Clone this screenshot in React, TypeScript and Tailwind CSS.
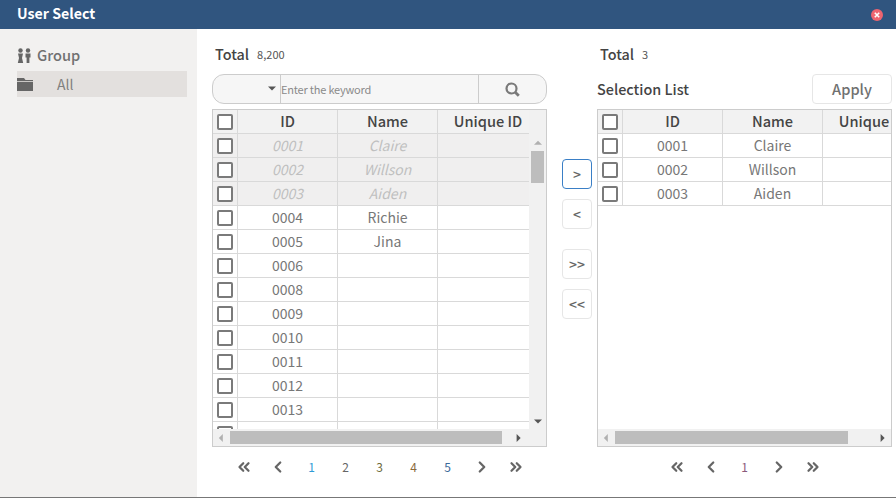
import React from 'react';
import { ChevronLeft, ChevronRight, ChevronsLeft, ChevronsRight } from 'lucide-react';

const font = { fontFamily: '"Noto Sans CJK KR", "Noto Sans", sans-serif' };

const leftRows = [
  { id: '0001', name: 'Claire', off: true },
  { id: '0002', name: 'Willson', off: true },
  { id: '0003', name: 'Aiden', off: true },
  { id: '0004', name: 'Richie' },
  { id: '0005', name: 'Jina' },
  { id: '0006', name: '' },
  { id: '0008', name: '' },
  { id: '0009', name: '' },
  { id: '0010', name: '' },
  { id: '0011', name: '' },
  { id: '0012', name: '' },
  { id: '0013', name: '' },
  { id: '', name: '' },
];

const rightRows = [
  { id: '0001', name: 'Claire' },
  { id: '0002', name: 'Willson' },
  { id: '0003', name: 'Aiden' },
];

const Check = () => (
  <span className="block w-[16px] h-[16px] border-2 border-[#7a7a7a] rounded-[2px] bg-white" />
);

const HeadRow = () => (
  <div className="flex h-[24px] shrink-0 bg-[#f2f2f2] border-b border-[#d9d9d9] text-[14.6px] font-medium text-[#444] leading-[22px] w-max">
    <div className="w-[25px] border-r border-[#d9d9d9] flex items-center justify-center"><Check /></div>
    <div className="w-[100px] border-r border-[#d9d9d9] text-center">ID</div>
    <div className="w-[100px] border-r border-[#d9d9d9] text-center">Name</div>
    <div className="w-[100px] text-center whitespace-nowrap">Unique ID</div>
  </div>
);

const Row = ({ id, name, off }: { id: string; name: string; off?: boolean }) => (
  <div
    className={
      'flex h-[24px] shrink-0 border-b border-[#d9d9d9] text-[14px] leading-[23px] w-max ' +
      (off ? 'bg-[#f0efef] text-[#bfbfbf] italic' : 'bg-white text-[#777]')
    }
  >
    <div className="w-[25px] border-r border-[#d9d9d9] flex items-center justify-center"><Check /></div>
    <div className="w-[100px] border-r border-[#d9d9d9] text-center">{id}</div>
    <div className="w-[100px] border-r border-[#d9d9d9] text-center">{name}</div>
    <div className="w-[100px]" />
  </div>
);

const Tri = ({ dir, color }: { dir: 'up' | 'down' | 'left' | 'right'; color: string }) => {
  const pts = {
    up: '0,6 5,1 10,6',
    down: '0,2 10,2 5,7',
    left: '6,0 6,10 1,5',
    right: '2,0 2,10 7,5',
  }[dir];
  return (
    <svg width="10" height="10" viewBox="0 0 10 10" className="block" style={{ transform: 'scale(0.8)' }}>
      <polygon points={pts} fill={color} />
    </svg>
  );
};

const HBar = ({ thumb, gap }: { thumb: string; gap: string }) => (
  <div className="h-[17px] shrink-0 bg-[#f1f1f1] flex items-center pl-[1px]">
    <div className="w-[16px] flex justify-center"><Tri dir="left" color="#b0b0b0" /></div>
    <div className={'h-[13px] bg-[#bdbdbd] ' + thumb} />
    <div className={gap} />
    <Tri dir="right" color="#555" />
  </div>
);

const PagerIcon = ({ children }: { children: React.ReactNode }) => (
  <span className="w-[34px] flex justify-center text-[#666]">{children}</span>
);

const Pager = ({ pages }: { pages: { n: number; c: string }[] }) => (
  <div className="flex items-center justify-center h-[20px] text-[12px]">
    <PagerIcon><ChevronsLeft size={18} strokeWidth={3} /></PagerIcon>
    <PagerIcon><ChevronLeft size={18} strokeWidth={3} /></PagerIcon>
    {pages.map((p) => (
      <span key={p.n} className="w-[34px] text-center" style={{ color: p.c }}>{p.n}</span>
    ))}
    <PagerIcon><ChevronRight size={18} strokeWidth={3} /></PagerIcon>
    <PagerIcon><ChevronsRight size={18} strokeWidth={3} /></PagerIcon>
  </div>
);

const MoveBtn = ({ label, active, cls }: { label: string; active?: boolean; cls: string }) => (
  <button
    className={
      'w-[30px] h-[30px] rounded-[4px] bg-white text-[14px] font-medium text-[#666] flex items-center justify-center border ' +
      (active ? 'border-[#3a7fc6] ' : 'border-[#e6e6e6] ') +
      cls
    }
  >
    {label}
  </button>
);

export default function App() {
  return (
    <div className="w-[896px] h-[498px] flex flex-col bg-white overflow-hidden border-b border-[#777]" style={font}>
      {/* title bar */}
      <div className="h-[29px] shrink-0 bg-[#30557f] flex items-center justify-between pl-[17px] pr-[13px]">
        <span className="text-white text-[14.2px] font-bold leading-[20px] -mt-[3px]">User Select</span>
        <svg width="12" height="12" viewBox="0 0 12 12">
          <circle cx="6" cy="6" r="6" fill="#ee6570" />
          <path d="M3.8 3.8 L8.2 8.2 M8.2 3.8 L3.8 8.2" stroke="#fff" strokeWidth="1.6" />
        </svg>
      </div>

      <div className="flex flex-1 min-h-0">
        {/* group tree */}
        <div className="w-[197px] shrink-0 bg-[#f2f1f0] pt-[16px] pl-[17px] pr-[10px]">
          <div className="flex items-center h-[20px] gap-[5px] text-[14.6px] font-medium text-[#707070]">
            <svg width="15" height="15" viewBox="0 0 15 15" fill="#666">
              <circle cx="3.5" cy="2.5" r="2.2" />
              <circle cx="11" cy="2.5" r="2.2" />
              <path d="M1 5.5 H6 L5 10 L6.2 15 H0.8 L2 10 Z" />
              <path d="M8.5 5.5 H13.5 V9.5 H12.4 V15 H9.6 V9.5 H8.5 Z" />
            </svg>
            Group
          </div>
          <div className="mt-[6px] h-[26px] bg-[#e3e0de] flex items-center text-[14px] text-[#808080]">
            <svg width="16" height="13" viewBox="0 0 16 13" fill="#666" className="mr-[24px]">
              <path d="M0 0 H7 L8.5 2 H16 V3 H0 Z" />
              <rect x="0" y="3.8" width="16" height="9.2" />
            </svg>
            All
          </div>
        </div>

        {/* source list */}
        <div className="w-[335px] shrink-0 ml-[15px] flex flex-col">
          <div className="h-[45px] pl-[3px] pt-[15px] flex items-start gap-[8px] text-[#444]">
            <span className="text-[14.4px] font-medium leading-[20px]">Total</span>
            <span className="text-[11px] leading-[20px] text-[#555]">8,200</span>
          </div>
          <div className="h-[30px] border border-[#ccc] rounded-[12px] bg-[#f6f6f6] flex items-center">
            <div className="w-[68px] h-full border-r border-[#ccc] flex items-center justify-end pr-[3px]">
              <Tri dir="down" color="#555" />
            </div>
            <span className="flex-1 text-[11px] tracking-[-0.2px] text-[#8a8a8a] truncate">Enter the keyword</span>
            <div className="w-[68px] h-full border-l border-[#ccc] flex items-center justify-center">
              <svg width="15" height="15" viewBox="0 0 15 15" fill="none" stroke="#7a7a7a">
                <circle cx="6.5" cy="6.5" r="5" strokeWidth="2.2" />
                <path d="M10.2 10.2 L13.8 13.8" strokeWidth="2.8" />
              </svg>
            </div>
          </div>
          <div className="mt-[5px] h-[338px] border border-[#ccc] flex flex-col overflow-hidden">
            <div className="flex flex-1 min-h-0">
              <div className="w-[316px] overflow-hidden flex flex-col">
                <HeadRow />
                {leftRows.map((r, i) => (
                  <Row key={i} id={r.id} name={r.name} off={r.off} />
                ))}
              </div>
              <div className="w-[17px] bg-[#f1f1f1] flex flex-col items-center pt-[29px]">
                <Tri dir="up" color="#b0b0b0" />
                <div className="w-[13px] h-[32px] bg-[#bdbdbd] mt-[2px]" />
                <div className="flex-1" />
                <div className="mb-[2px]"><Tri dir="down" color="#555" /></div>
              </div>
            </div>
            <HBar thumb="w-[272px]" gap="w-[12px]" />
          </div>
          <div className="mt-[10px]">
            <Pager
              pages={[
                { n: 1, c: '#2f9bd6' },
                { n: 2, c: '#666' },
                { n: 3, c: '#6e6a3c' },
                { n: 4, c: '#8a6a3c' },
                { n: 5, c: '#3c6a9a' },
              ]}
            />
          </div>
        </div>

        {/* move buttons */}
        <div className="w-[50px] shrink-0 flex flex-col pl-[15px] pt-[130px]">
          <MoveBtn label=">" active cls="" />
          <MoveBtn label="<" cls="mt-[10px]" />
          <MoveBtn label=">>" cls="mt-[20px]" />
          <MoveBtn label="<<" cls="mt-[10px]" />
        </div>

        {/* selection list */}
        <div className="w-[295px] shrink-0 flex flex-col">
          <div className="h-[45px] pl-[3px] pt-[15px] flex items-start gap-[8px] text-[#444]">
            <span className="text-[14.4px] font-medium leading-[20px]">Total</span>
            <span className="text-[11px] leading-[20px] text-[#555]">3</span>
          </div>
          <div className="h-[30px] flex items-center justify-between">
            <span className="text-[14.4px] font-medium text-[#444]">Selection List</span>
            <button className="w-[80px] h-[30px] border border-[#e6e6e6] rounded-[4px] bg-white text-[14.6px] font-medium text-[#707070]">
              Apply
            </button>
          </div>
          <div className="mt-[5px] h-[338px] border border-[#ccc] flex flex-col overflow-hidden">
            <div className="flex-1 min-h-0 overflow-hidden flex flex-col">
              <HeadRow />
              {rightRows.map((r) => (
                <Row key={r.id} id={r.id} name={r.name} />
              ))}
            </div>
            <HBar thumb="w-[233px]" gap="w-[30px]" />
          </div>
          <div className="mt-[10px]">
            <Pager pages={[{ n: 1, c: '#8a5a7a' }]} />
          </div>
        </div>
      </div>
    </div>
  );
}
